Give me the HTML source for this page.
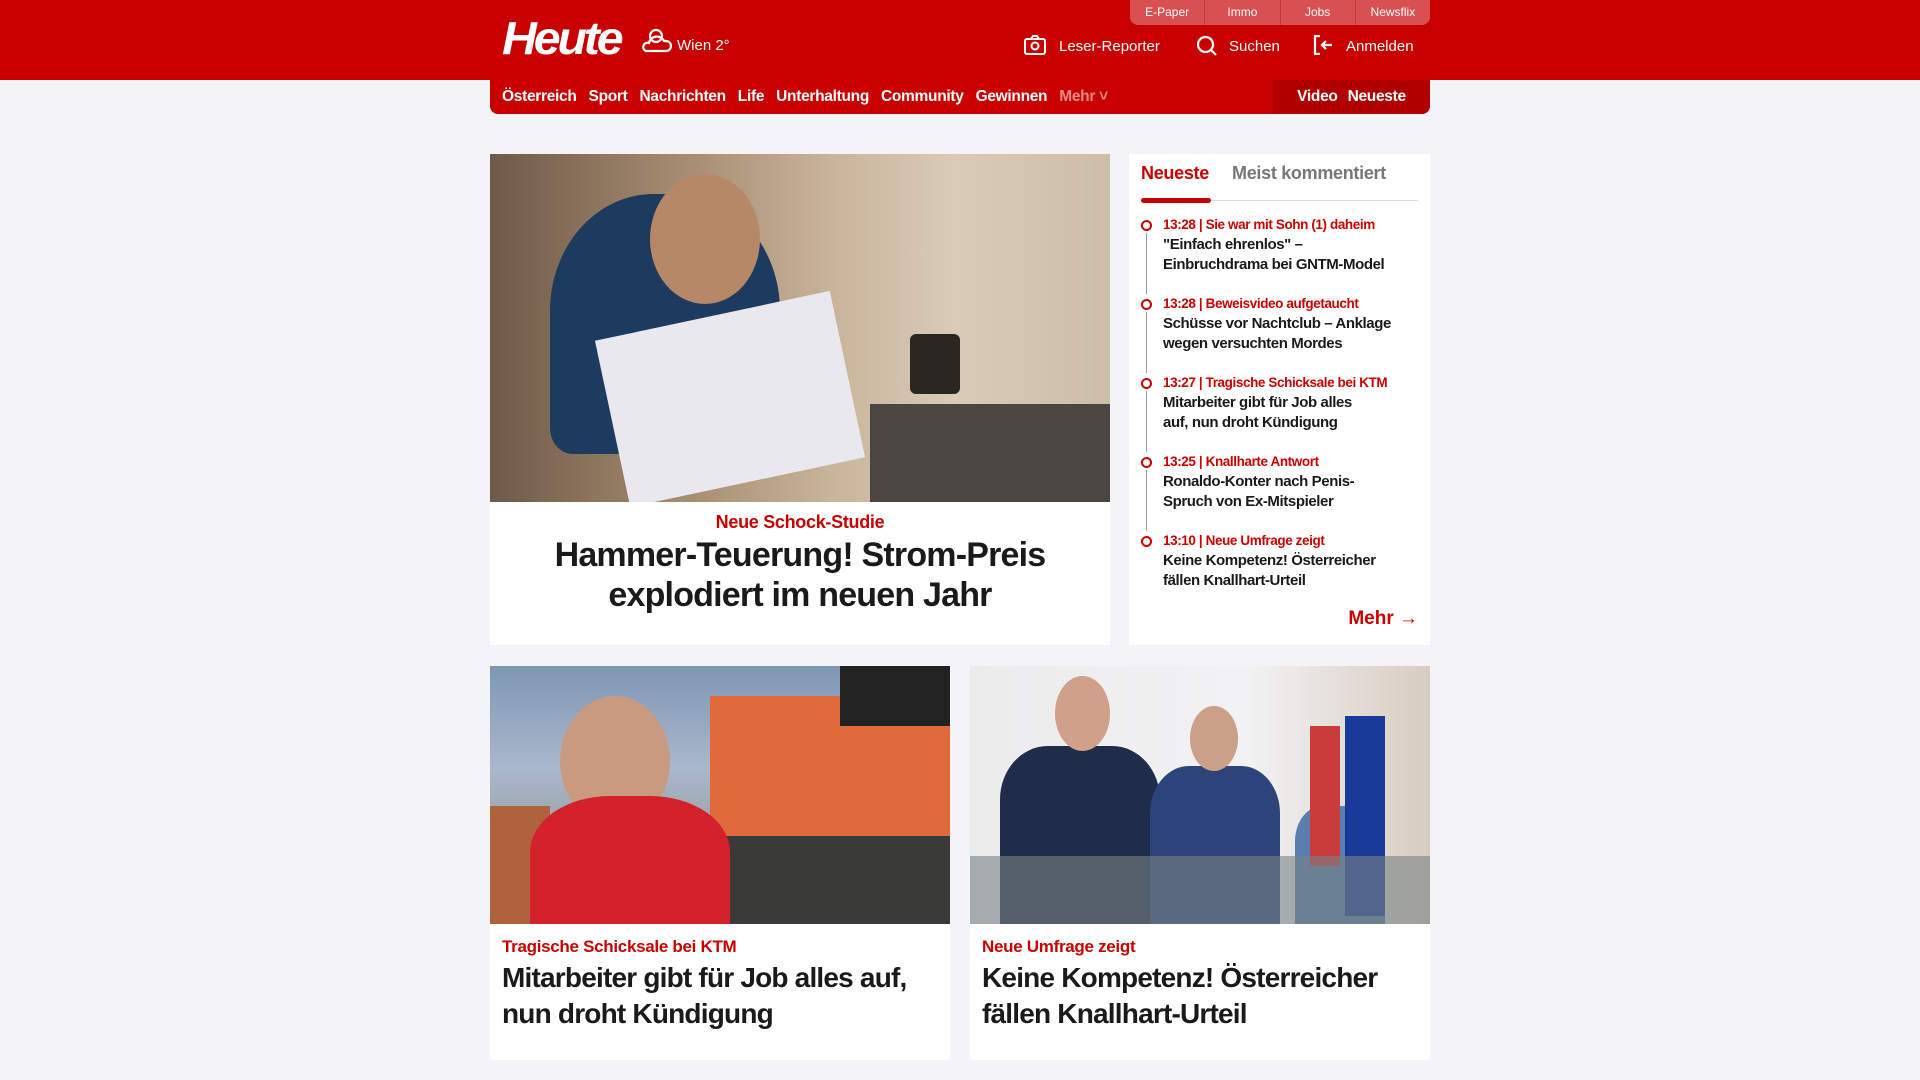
<!DOCTYPE html>
<html><head><meta charset="utf-8"><style>
*{margin:0;padding:0;box-sizing:border-box}
body{width:1920px;height:1080px;overflow:hidden;background:#f4f4f6;font-family:"Liberation Sans",sans-serif;color:#1a1a1a;position:relative}
.hdr{position:absolute;left:0;top:0;width:1920px;height:80px;background:#c80000}
.abs{position:absolute}
.top{left:1130px;top:0;width:300px;height:25px;display:flex;background:#d85050;border-radius:0 0 8px 8px;overflow:hidden}
.top div{flex:1;color:#fff;font-size:12px;text-align:center;line-height:24px;border-left:1px solid #c03838}
.top div:first-child{border-left:none}
.logo{left:502px;top:11px;color:#fff;font-size:46px;font-weight:bold;font-style:italic;letter-spacing:-3px;transform:scaleX(1.05);transform-origin:left}
.wt{color:#fff;font-size:15px}
.nav{left:490px;top:80px;width:940px;height:34px;background:#c80000;border-radius:0 0 8px 8px;display:flex;align-items:center;padding-left:12px}
.nav span{color:#fff;font-weight:bold;font-size:15.5px;margin-right:12px;letter-spacing:-0.3px}
.nav .m{color:#ea8a8a}
.vn{position:absolute;right:0;top:0;height:34px;width:157px;background:#b00000;border-radius:0 0 8px 0;display:flex;align-items:center;justify-content:center;gap:10px}
.vn span{margin:0}
.card{background:#fff;position:absolute}
.red{color:#c80000;font-weight:bold}
.img{position:absolute;overflow:hidden}
.bh{position:absolute;top:294px;left:12px;font-size:28px;font-weight:bold;line-height:36px;letter-spacing:-0.8px;white-space:nowrap}
</style></head><body>
<div class="hdr"></div>
<div class="abs top"><div>E-Paper</div><div>Immo</div><div>Jobs</div><div>Newsflix</div></div>
<div class="abs logo">Heute</div>
<svg class="abs" style="left:640px;top:27px" width="32" height="28" viewBox="0 0 32 28" fill="none" stroke="#fff" stroke-width="2.2"><circle cx="16" cy="9" r="6"/><path d="M6 24h20a5 5 0 0 0 0-10h-2a8 8 0 0 0-15 2A4 4 0 0 0 6 24z"/></svg>
<div class="abs wt" style="left:677px;top:37px">Wien 2°</div>
<svg class="abs" style="left:1024px;top:35px" width="22" height="20" viewBox="0 0 22 20" fill="none" stroke="#fff" stroke-width="2"><rect x="1" y="4" width="20" height="15" rx="2"/><path d="M7 4l2-3h4l2 3"/><circle cx="11" cy="11" r="3.5"/></svg>
<div class="abs wt" style="left:1059px;top:38px">Leser-Reporter</div>
<svg class="abs" style="left:1196px;top:35px" width="22" height="22" viewBox="0 0 22 22" fill="none" stroke="#fff" stroke-width="2.2"><circle cx="9.5" cy="9.5" r="7.5"/><path d="M15 15l5 5"/></svg>
<div class="abs wt" style="left:1229px;top:38px">Suchen</div>
<svg class="abs" style="left:1313px;top:35px" width="22" height="20" viewBox="0 0 22 20" fill="none" stroke="#fff" stroke-width="2.2"><path d="M7 1H2v18h5"/><path d="M19 10H9M13 6l-4 4 4 4"/></svg>
<div class="abs wt" style="left:1346px;top:38px">Anmelden</div>
<div class="abs nav"><span>Österreich</span><span>Sport</span><span>Nachrichten</span><span>Life</span><span>Unterhaltung</span><span>Community</span><span>Gewinnen</span><span class="m">Mehr ˅</span>
<div class="vn"><span>Video</span><span>Neueste</span></div></div>

<div class="card" style="left:490px;top:154px;width:620px;height:491px">
<div class="img" style="left:0;top:0;width:620px;height:348px;background:linear-gradient(90deg,#6e5a48 0%,#a48a6e 30%,#c8b49a 55%,#d9cbb6 75%,#cdbda6 100%)">
<div class="abs" style="left:60px;top:40px;width:230px;height:260px;border-radius:45% 45% 10% 10%;background:#1c3b5e"></div>
<div class="abs" style="left:160px;top:20px;width:110px;height:130px;border-radius:50%;background:#b78868"></div>
<div class="abs" style="left:120px;top:160px;width:240px;height:170px;background:#e8e8ee;transform:rotate(-12deg)"></div>
<div class="abs" style="left:380px;top:250px;width:240px;height:98px;background:#4b4642"></div>
<div class="abs" style="left:420px;top:180px;width:50px;height:60px;border-radius:6px;background:#2a2622"></div>
</div>
<div class="red" style="position:absolute;top:358px;width:100%;text-align:center;font-size:18px;letter-spacing:-0.3px">Neue Schock-Studie</div>
<div style="position:absolute;top:381px;width:100%;text-align:center;font-size:34px;font-weight:bold;line-height:40px;letter-spacing:-0.8px">Hammer-Teuerung! Strom-Preis<br>explodiert im neuen Jahr</div>
</div>

<div class="card" style="left:1129px;top:154px;width:301px;height:491px">
<div style="position:absolute;top:9px;left:12px;font-size:18px;font-weight:bold;letter-spacing:-0.3px" class="red">Neueste</div>
<div style="position:absolute;top:9px;left:103px;font-size:18px;font-weight:bold;color:#777;letter-spacing:-0.3px">Meist kommentiert</div>
<div style="position:absolute;top:46px;left:12px;width:277px;height:1px;background:#ddd"></div>
<div style="position:absolute;top:44px;left:12px;width:70px;height:5px;border-radius:3px;background:#c80000"></div>
<div id="list" style="position:absolute;top:61px;left:12px;width:285px"></div>
<div class="red" style="position:absolute;top:454px;right:12px;font-size:19px">Mehr →</div>
</div>

<div class="card" style="left:490px;top:666px;width:460px;height:394px">
<div class="img" style="left:0;top:0;width:460px;height:258px;background:linear-gradient(180deg,#7f96b4 0%,#a9b8cc 40%,#8a8274 100%)">
<div class="abs" style="left:220px;top:30px;width:240px;height:228px;background:#e06a3a"></div>
<div class="abs" style="left:350px;top:0;width:110px;height:60px;background:#222"></div>
<div class="abs" style="left:220px;top:170px;width:240px;height:88px;background:#3a3a38"></div>
<div class="abs" style="left:0;top:140px;width:60px;height:118px;background:#b0623c"></div>
<div class="abs" style="left:70px;top:30px;width:110px;height:130px;border-radius:50%;background:#c89a80"></div>
<div class="abs" style="left:40px;top:130px;width:200px;height:140px;border-radius:40% 40% 0 0;background:#d4222a"></div>
</div>
<div class="red" style="position:absolute;top:271px;left:12px;font-size:17px;letter-spacing:-0.3px">Tragische Schicksale bei KTM</div>
<div class="bh">Mitarbeiter gibt für Job alles auf,<br>nun droht Kündigung</div>
</div>

<div class="card" style="left:970px;top:666px;width:460px;height:394px">
<div class="img" style="left:0;top:0;width:460px;height:258px;background:linear-gradient(90deg,#ecebec 0%,#f2f2f4 60%,#d8ccc0 100%)">
<div class="abs" style="left:30px;top:80px;width:160px;height:178px;border-radius:30% 30% 0 0;background:#1f2c4a"></div>
<div class="abs" style="left:85px;top:10px;width:55px;height:75px;border-radius:50%;background:#d0a08a"></div>
<div class="abs" style="left:180px;top:100px;width:130px;height:158px;border-radius:30% 30% 0 0;background:#2d447a"></div>
<div class="abs" style="left:220px;top:40px;width:48px;height:65px;border-radius:50%;background:#caa088"></div>
<div class="abs" style="left:325px;top:140px;width:90px;height:118px;border-radius:30% 30% 0 0;background:#5b7eb0"></div>
<div class="abs" style="left:340px;top:60px;width:30px;height:140px;background:#c83c3c"></div>
<div class="abs" style="left:375px;top:50px;width:40px;height:200px;background:#1a3a9a"></div>
<div class="abs" style="left:0;top:190px;width:460px;height:68px;background:rgba(120,130,130,.6)"></div>
</div>
<div class="red" style="position:absolute;top:271px;left:12px;font-size:17px;letter-spacing:-0.3px">Neue Umfrage zeigt</div>
<div class="bh">Keine Kompetenz! Österreicher<br>fällen Knallhart-Urteil</div>
</div>

<script>
var d=[["13:28","Sie war mit Sohn (1) daheim",'"Einfach ehrenlos" –<br>Einbruchdrama bei GNTM-Model'],["13:28","Beweisvideo aufgetaucht","Schüsse vor Nachtclub – Anklage<br>wegen versuchten Mordes"],["13:27","Tragische Schicksale bei KTM","Mitarbeiter gibt für Job alles<br>auf, nun droht Kündigung"],["13:25","Knallharte Antwort","Ronaldo-Konter nach Penis-<br>Spruch von Ex-Mitspieler"],["13:10","Neue Umfrage zeigt","Keine Kompetenz! Österreicher<br>fällen Knallhart-Urteil"]];
var h="";d.forEach(function(x,i){h+='<div style="position:relative;height:79px;padding-left:22px;white-space:nowrap">'+(i<4?'<div style="position:absolute;left:5px;top:18px;width:1px;height:61px;background:#999"></div>':'')+'<div style="position:absolute;left:0;top:5px;width:11px;height:11px;border:2px solid #c80000;border-radius:50%"></div><div class="red" style="font-size:13.5px;line-height:20px;letter-spacing:-0.4px">'+x[0]+' | '+x[1]+'</div><div style="font-size:15px;font-weight:bold;line-height:20px;letter-spacing:-0.4px">'+x[2]+'</div></div>'});
document.getElementById("list").innerHTML=h;
</script>
</body></html>
